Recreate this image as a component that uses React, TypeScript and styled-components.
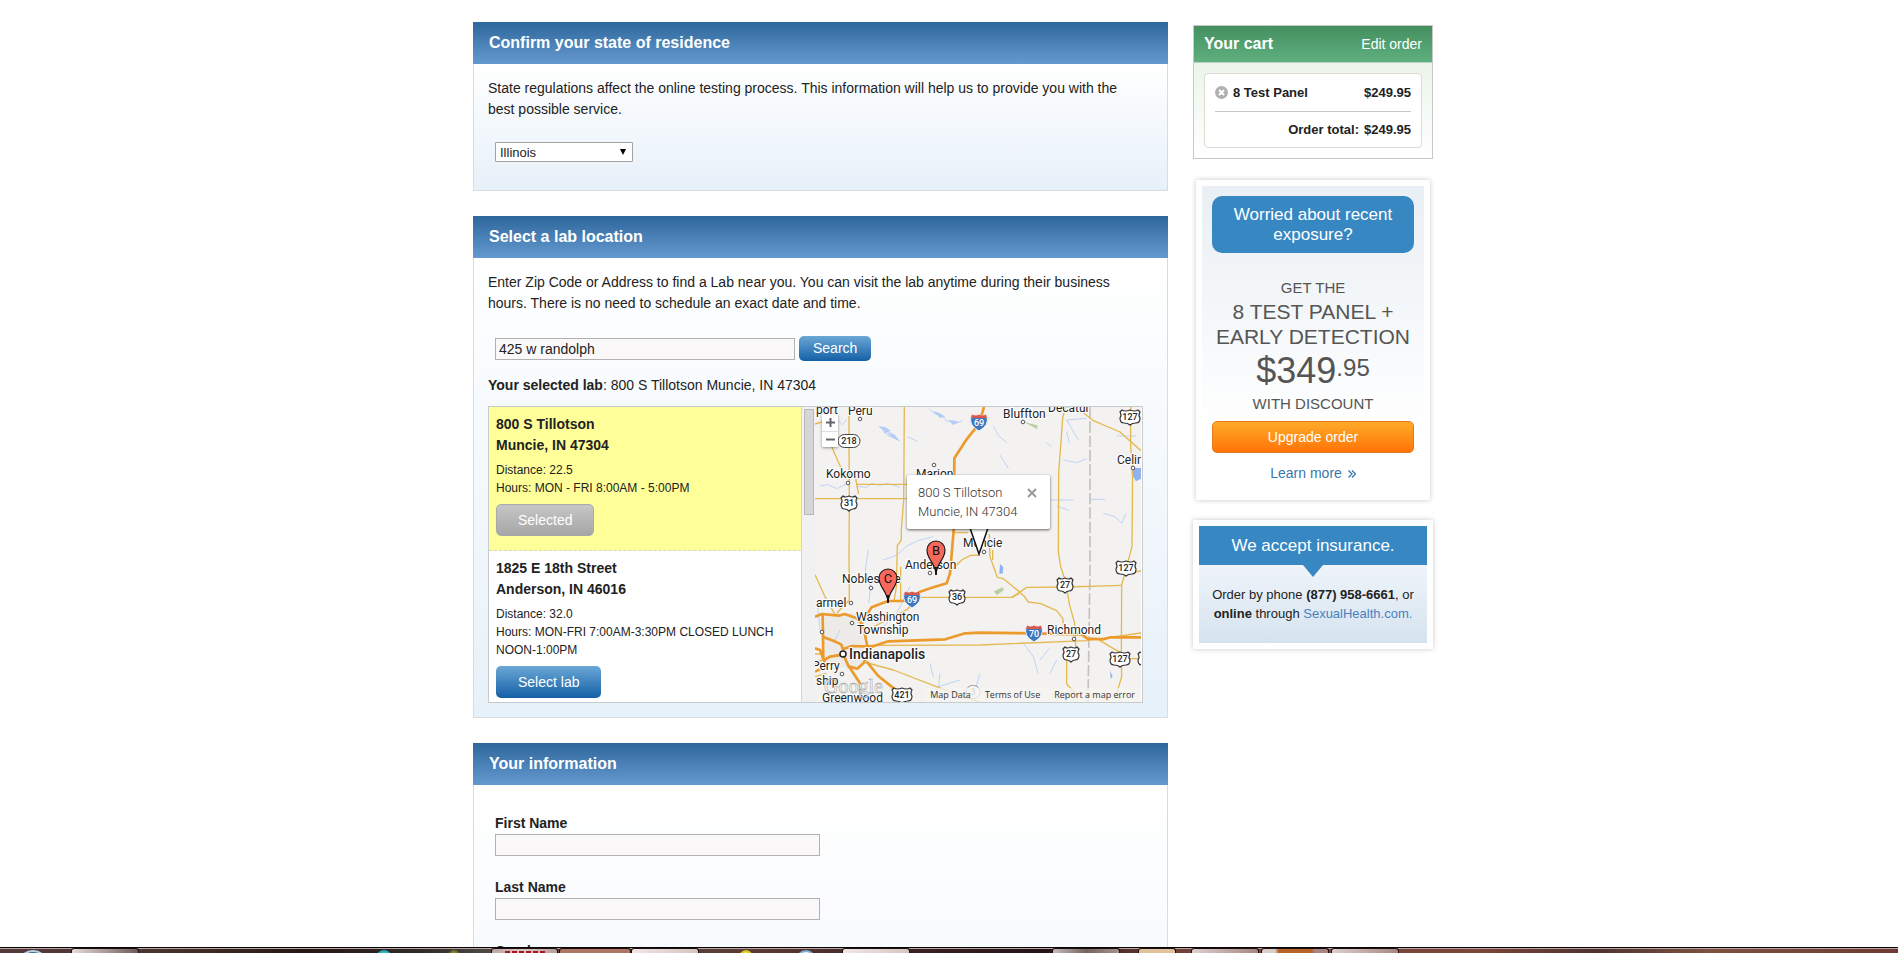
import React from 'react';
import styled, { createGlobalStyle, css } from 'styled-components';

const GlobalStyle = createGlobalStyle`
  *, *::before, *::after { box-sizing: border-box; }
  body {
    margin: 0;
    background: #fff;
    color: #222;
    font: 14px/21px "Liberation Sans", Arial, sans-serif;
  }
  p, h2, h3 { margin: 0; }
  button, input, select { font-family: inherit; margin: 0; }
  a { text-decoration: none; }
`;

/* ---------- page frame ---------- */

const Screen = styled.div`
  display: flex;
  flex-direction: column;
  height: 100vh;
  overflow: hidden;
`;

const Viewport = styled.div`
  flex: 1;
  min-height: 0;
  overflow: hidden;
`;

const Page = styled.div`
  display: flex;
  align-items: flex-start;
  gap: 25px;
  max-width: 968px;
  margin: 0 auto;
  padding: 22px 0 0 8px;
`;

const Main = styled.main`
  display: flex;
  flex-direction: column;
  gap: 25px;
  flex: 1;
  min-width: 0;
`;

const Side = styled.aside`
  flex: 0 0 240px;
  padding-top: 3px;
`;

/* ---------- panels ---------- */

const PanelTitle = styled.h2`
  padding: 0 16px;
  background: linear-gradient(#2e679c, #6499cf);
  color: #fff;
  font-size: 16px;
  line-height: 42px;
`;

const PanelBody = styled.div<{ $tall?: boolean }>`
  display: flex;
  flex-direction: column;
  align-items: flex-start;
  padding: 14px 24px 14px 14px;
  border: 1px solid #d9dbdf;
  border-top: 0;
  background: linear-gradient(#fff, #e7f1f9);
  ${(p) => p.$tall && css`min-height: 560px;`}
`;

const Panel = ({ title, tall, children }: { title: string; tall?: boolean; children: React.ReactNode }) => (
  <section>
    <PanelTitle>{title}</PanelTitle>
    <PanelBody $tall={tall}>{children}</PanelBody>
  </section>
);

/* ---------- form parts ---------- */

const SelectBox = styled.span`
  position: relative;
  display: inline-block;
  width: 138px;
  margin: 22px 0 14px 7px;
  svg {
    position: absolute;
    right: 6px;
    top: 6px;
    pointer-events: none;
  }
`;

const Select = styled.select`
  display: block;
  appearance: none;
  width: 100%;
  height: 20px;
  padding: 0 4px;
  border: 1px solid #a2a2a2;
  border-radius: 1px;
  background: #fff;
  color: #222;
  font-size: 13px;
`;

const TextInput = styled.input`
  width: 325px;
  height: 22px;
  padding: 0 3px;
  border: 1px solid #b1b1b3;
  background: #faf8f9;
  color: #222;
  font-size: 14px;
`;

const SearchForm = styled.form`
  display: flex;
  align-items: center;
  gap: 4px;
  margin: 22px 0 14px 7px;
  ${TextInput} { width: 300px; }
`;

const Button = styled.button<{ $tone?: 'blue' | 'grey' | 'orange'; $size?: 'small' | 'wide' }>`
  height: 32px;
  padding: 0 21px;
  border: 1px solid transparent;
  border-radius: 5px;
  color: #fff;
  font-size: 14px;
  line-height: 28px;
  background: linear-gradient(#6ba7d6, #1460a6) border-box;
  ${(p) => p.$tone === 'grey' && css`
    border-color: #a9a9a9;
    background: linear-gradient(#c6c6c6, #a6a6a6);
  `}
  ${(p) => p.$tone === 'orange' && css`
    border-color: #e47a1d;
    background: linear-gradient(#ffab28, #ff7407);
  `}
  ${(p) => p.$size === 'small' && css`
    height: 25px;
    padding: 0 13px;
    line-height: 21px;
  `}
  ${(p) => p.$size === 'wide' && css`
    display: block;
    width: 100%;
    padding: 0;
  `}
`;

const Fields = styled.form`
  display: flex;
  flex-direction: column;
  gap: 21px;
  padding: 14px 0 0 7px;
`;

const Field = styled.label`
  display: flex;
  flex-direction: column;
  font-weight: bold;
  line-height: 21px;
`;

/* ---------- lab list and map ---------- */

const LabFinder = styled.div`
  display: flex;
  width: 100%;
  height: 297px;
  margin-top: 10px;
  border: 1px solid #c8cbce;
  background: #fff;
  overflow: hidden;
`;

const LabList = styled.div`
  flex: 1;
  min-width: 0;
`;

const Lab = styled.article<{ $selected?: boolean }>`
  padding: 7px 7px 14px;
  border-bottom: 1px dashed #d3d3d3;
  background: ${(p) => (p.$selected ? '#ffff99' : '#fff')};
  h3 { font-size: 14px; line-height: 21px; }
  p { margin: 5px 0 7px; font-size: 12px; line-height: 18px; }
`;

const Scrollbar = styled.div`
  flex: 0 0 14px;
  padding: 2px 1px 0 2px;
  border-left: 1px solid #d5d5d5;
  background: #f1f1f1;
  div {
    height: 106px;
    border: 1px solid #b9b9b9;
    background: #d6d6d6;
  }
`;

const MapBox = styled.div`
  position: relative;
  flex: 0 0 326px;
  margin-right: 1px;
  overflow: hidden;
  background: #f3f2f0;
  font-family: Roboto, sans-serif;
  > svg { display: block; }
`;

const ZoomControl = styled.div`
  position: absolute;
  left: 7px;
  top: 7px;
  display: flex;
  flex-direction: column;
  width: 16px;
  border-radius: 1px;
  background: #fff;
  box-shadow: 0 1px 3px rgba(0, 0, 0, 0.4);
  button {
    display: flex;
    align-items: center;
    justify-content: center;
    height: 17px;
    padding: 0;
    border: 0;
    background: none;
  }
  button + button { border-top: 1px solid #ddd; height: 16px; }
`;

const InfoWindow = styled.div`
  position: absolute;
  left: 92px;
  top: 68px;
  width: 143px;
  height: 54px;
  padding: 8px 11px;
  border-radius: 2px;
  background: #fff;
  box-shadow: 0 1px 3px rgba(0, 0, 0, 0.6);
  color: #333;
  font-size: 13px;
  font-weight: 300;
  line-height: 19px;
  button {
    position: absolute;
    right: 13px;
    top: 13px;
    display: flex;
    padding: 0;
    border: 0;
    background: none;
  }
`;

const MapCredits = styled.div`
  position: absolute;
  right: 0;
  bottom: 0;
  display: flex;
  gap: 14px;
  height: 14px;
  padding: 0 6px 0 5px;
  background: rgba(245, 244, 242, 0.75);
  font: 9px/14px "Open Sans", "DejaVu Sans", sans-serif;
  a { color: #333; }
`;

const ROAD = '#e5b951';
const HIGHWAY = '#eb9a2b';
const WATER = '#b3cdf6';

const minorRoads = [
  'M147 21V140L148 300 147 470 148 600',
  'M45 72L66 66M95 140L122 202 126 204',
  'M313 21L312 180 311 300 304 390V420L292 436 289 560 282 606',
  'M45 296H320M170 253H325M147 210L166 232 176 282',
  'M45 524L74 588 104 642M110 640L148 600',
  'M302 500V600M202 690L322 628 346 604',
  'M460 398H505M450 514L488 478 512 466 540 465',
  'M360 592H636L680 562 800 561 966 556',
  'M636 592L658 580',
  'M45 762H72M160 740L210 736 540 735 860 722 1023 699',
  'M192 786L280 810 415 862 540 907',
  'M796 21L788 55 776 220 775 455 782 500 797 545 808 612 824 670 828 760 800 770 800 852 830 885',
  'M850 38L880 62 960 96 1023 152',
  'M992 21V140L998 200 996 440 965 555 964 780 965 830 950 880',
  'M978 520L1023 513M975 776H1023M900 722L965 760',
  'M568 402L570 470 592 532 610 536 640 560 672 588 685 606 722 611 770 632 788 655 792 685',
  'M45 790L75 775 128 760M45 830L80 820',
  'M578 450V480',
];

const highways = [
  'M552 21L538 70 500 118 463 175 462 380 450 520 440 550 400 562 360 575 320 603H264L215 622 198 648 188 666',
  'M45 650L66 642 116 647 134 642 170 655 190 676 198 720 202 738',
  'M68 645L70 780M68 710L100 722 124 734 130 750',
  'M128 748L156 738 215 740 265 724 436 718 495 700 540 698 700 700 845 703 862 716 910 718 932 712H1023',
  'M70 782L90 770 130 764 146 800 172 806 190 790 200 772',
  'M146 798L180 850 182 907M200 785L235 828 290 872M45 815L72 802 74 775M45 745L60 750 72 782',
];

const waters = [
  'M238 80L262 92 268 106 298 122M250 95L272 112M388 25L402 40 428 48 438 62 468 70 488 62M322 110L352 124',
  'M170 259L200 262 214 250 240 256 262 250 300 262M60 258L84 254 110 266 140 252M100 50L128 74 140 58',
  'M205 450L196 510 212 560 206 610M250 480L290 466 320 438 360 420 400 410M330 560L290 640 240 690',
  'M580 78L596 108 620 128M600 165L625 205M740 128L755 140M800 95L808 130M790 180L830 188 860 176',
  'M835 120L800 60 860 55M746 300H820M770 318L805 330M910 340L945 350 965 370 978 340M870 298H915',
  'M950 108H1008M670 730L700 770 714 820M748 745L720 780M770 780L750 820M540 820L528 860',
  'M390 790L400 830M420 820L416 860 480 840M120 690L100 730M52 610L60 690 80 720',
];

const towns: [number, number][] = [
  [45, 12], [33, 76], [119, 58], [56, 181], [115, 166], [169, 145], [36, 196], [37, 216],
  [27, 267], [208, 15], [318, 61], [259, 232], [7, 225],
];

const places: [string, number, number][] = [
  ['port', 1, 7], ['Peru', 33, 8], ['Kokomo', 11, 71], ['Marion', 101, 71], ['Noblesville', 27, 176],
  ['Anderson', 90, 162], ['Muncie', 148, 140], ['armel', 1, 200], ['Washington', 41, 214],
  ['Township', 42, 227], ['Perry', -3, 263], ['ship', 1, 278], ['Greenwood', 7, 295],
  ['Bluffton', 188, 11], ['Decatur', 233, 5], ['Celina', 302, 57], ['Richmond', 232, 227],
];

const MapText = styled.text<{ $big?: boolean }>`
  fill: #222;
  stroke: #fff;
  stroke-width: 2px;
  paint-order: stroke;
  font-size: ${(p) => (p.$big ? 14 : 12)}px;
  font-weight: ${(p) => (p.$big ? 500 : 400)};
`;

const ShieldText = styled.text`
  font-size: 9px;
  font-weight: 500;
  text-anchor: middle;
`;

const UsShield = ({ x, y, n, wide }: { x: number; y: number; n?: string; wide?: boolean }) => {
  const w = wide ? 10 : 8;
  return (
    <g transform={`translate(${x} ${y})`}>
      <path
        d={`M${-w + 2} -7Q${-w / 2} -5 0 -7Q${w / 2} -5 ${w - 2} -7L${w} -5Q${w - 2} -2 ${w} 1Q${w} 6 ${w - 4} 6Q2 6 0 8Q-2 6 ${-w + 4} 6Q${-w} 6 ${-w} 1Q${-w + 2} -2 ${-w} -5Z`}
        fill="#fff"
        stroke="#333"
        strokeWidth="1.2"
        strokeLinejoin="round"
      />
      {n && <ShieldText y="3" fill="#222">{n}</ShieldText>}
    </g>
  );
};

const StateShield = ({ x, y, n, faded }: { x: number; y: number; n: string; faded?: boolean }) => (
  <g transform={`translate(${x} ${y})`} opacity={faded ? 0.5 : 1}>
    <rect x={n.length > 1 ? -11 : -7} y="-6.5" width={n.length > 1 ? 22 : 14} height="13" rx="6.5" fill="#fff" stroke="#444" />
    <ShieldText y="3" fill="#222">{n}</ShieldText>
  </g>
);

const Interstate = ({ x, y, n }: { x: number; y: number; n: string }) => (
  <g transform={`translate(${x} ${y})`}>
    <path d="M-7 -7Q-3 -5 0 -7Q3 -5 7 -7Q10 -2 7 3Q5 6 0 9Q-5 6 -7 3Q-10 -2 -7 -7Z" fill="#3f78bd" stroke="#fff" strokeWidth=".8" />
    <path d="M-7 -7.500Q-3 -5.500 0 -7.500Q3 -5.500 7 -7.500L8 -4H-8Z" fill="#d9574c" />
    <ShieldText y="4" fill="#fff">{n}</ShieldText>
  </g>
);

const Marker = ({ x, y, n }: { x: number; y: number; n: string }) => (
  <g transform={`translate(${x} ${y})`}>
    <path d="M0 0C-1 -12 -9 -14 -9 -24A9 9 0 0 1 9 -24C9 -14 1 -12 0 0Z" fill="#f7685c" stroke="#111" strokeWidth="1.1" />
    <text y="-19" textAnchor="middle" fontSize="13" fill="#111">{n}</text>
    <path d="M0 1V-7" stroke="#111" strokeWidth="1.8" />
  </g>
);

const LabMap = () => (
  <MapBox>
    <svg width="326" height="295" viewBox="0 0 326 295" role="img" aria-label="Map of labs near Muncie, Indiana">
      <rect width="326" height="295" fill="#f3f2f0" />
      <g transform="scale(.33333) translate(-45 -21)" fill="none" strokeLinejoin="round">
        <path d="M60 640H190V800H80Z" fill="#ecebe8" />
        {waters.map((d) => <path key={d} d={d} stroke={WATER} strokeWidth="2.500" />)}
        <path d="M236 78L256 82 272 92 264 96 258 100 250 92ZM266 96L284 104 300 124 286 118 274 112ZM398 32L420 40 436 50 420 54ZM446 60L476 64 460 76Z" fill={WATER} />
        <path d="M995 204H1023V236L1008 244 995 222ZM600 492L610 502 608 520 598 522ZM930 812L938 830 932 836Z" fill="#8fb2f2" />
        <path d="M672 66L712 76V88ZM582 574L608 562 612 570 590 586ZM950 888L965 890 960 905Z" fill="#b9cfa0" />
        <path d="M870 21V500L864 907" stroke="#c4c2bf" strokeWidth="5" strokeDasharray="34 9" />
        {minorRoads.map((d) => <path key={d} d={d} stroke={ROAD} strokeWidth="4" />)}
        {highways.map((d) => <path key={d} d={d} stroke={HIGHWAY} strokeWidth="8" />)}
      </g>
      {towns.map(([x, y]) => <circle key={`${x}-${y}`} cx={x} cy={y} r="1.800" fill="#fff" stroke="#555" />)}
      <circle cx="28" cy="247" r="3" fill="#fff" stroke="#222" strokeWidth="1.500" />
      {places.map(([name, x, y]) => <MapText key={name} x={x} y={y}>{name}</MapText>)}
      <MapText $big x="34" y="252">Indianapolis</MapText>
      <StateShield x={34} y={34} n="218" />
      <UsShield x={34} y={96} n="31" />
      <UsShield x={142} y={190} n="36" />
      <UsShield x={87} y={288} n="421" wide />
      <UsShield x={250} y={178} n="27" />
      <UsShield x={256} y={247} n="27" />
      <UsShield x={315} y={10} n="127" wide />
      <UsShield x={311} y={161} n="127" wide />
      <UsShield x={305} y={252} n="127" wide />
      <UsShield x={333} y={252} wide />
      <StateShield x={158} y={285} n="3" faded />
      <Interstate x={97} y={192} n="69" />
      <Interstate x={164} y={15} n="69" />
      <Interstate x={219} y={226} n="70" />
      <Marker x={121} y={167} n="B" />
      <Marker x={73} y={195} n="C" />
      <path d="M154 121L164 147 174 121Z" fill="#fff" />
      <path d="M155 121L164 147 173 121" fill="none" stroke="#111" strokeWidth="1.500" />
      <text x="9" y="286" fontSize="20" fontFamily="Liberation Serif, serif" fill="#fff" stroke="#999" strokeWidth=".5">Google</text>
    </svg>
    <ZoomControl>
      <button type="button" aria-label="Zoom in">
        <svg width="9" height="9" viewBox="0 0 9 9"><path d="M4.500 0V9M0 4.500H9" stroke="#666" strokeWidth="2" /></svg>
      </button>
      <button type="button" aria-label="Zoom out">
        <svg width="9" height="9" viewBox="0 0 9 9"><path d="M0 4.500H9" stroke="#666" strokeWidth="2" /></svg>
      </button>
    </ZoomControl>
    <InfoWindow>
      800 S Tillotson<br />Muncie, IN 47304
      <button type="button" aria-label="Close">
        <svg width="10" height="10" viewBox="0 0 10 10"><path d="M1 1L9 9M9 1L1 9" stroke="#999" strokeWidth="2" /></svg>
      </button>
    </InfoWindow>
    <MapCredits>
      <a href="#data">Map Data</a>
      <a href="#terms">Terms of Use</a>
      <a href="#report">Report a map error</a>
    </MapCredits>
  </MapBox>
);

/* ---------- sidebar ---------- */

const Cart = styled.section`
  margin-bottom: 21px;
  border: 1px solid #c6c9c6;
  background: linear-gradient(#e4f0e4, #fff);
`;

const CartHead = styled.div`
  display: flex;
  justify-content: space-between;
  align-items: center;
  height: 37px;
  padding: 0 10px;
  border-bottom: 1px solid #bcd3c2;
  background: linear-gradient(#458f5f, #5fb07f);
  color: #fff;
  h2 { font-size: 16px; line-height: 20px; }
  a { color: #fff; }
`;

const CartBox = styled.div`
  margin: 10px;
  padding: 0 10px;
  border: 1px solid #dcdcd2;
  border-radius: 4px;
  background: #fff;
  font-size: 13px;
  font-weight: bold;
`;

const CartRow = styled.div<{ $total?: boolean }>`
  display: flex;
  align-items: center;
  gap: 5px;
  height: ${(p) => (p.$total ? 36 : 37)}px;
  ${(p) => p.$total && css`
    justify-content: flex-end;
    border-top: 1px solid #c8c8c8;
  `}
  button {
    display: flex;
    padding: 0;
    border: 0;
    background: none;
  }
  span:last-child { margin-left: ${(p) => (p.$total ? '0' : 'auto')}; }
`;

const Card = styled.section<{ $narrow?: boolean }>`
  margin: 0 ${(p) => (p.$narrow ? 3 : 0)}px 20px;
  padding: 6px;
  background: #fff;
  box-shadow: 0 0 5px rgba(0, 0, 0, 0.22);
  text-align: center;
`;

const Promo = styled.div`
  display: flex;
  flex-direction: column;
  align-items: stretch;
  height: 308px;
  padding: 10px 10px 0;
  background: linear-gradient(#e9eff4, #fff 80%);
  color: #555;
`;

const Question = styled.h2`
  margin-bottom: 23px;
  padding: 9px 16px 8px;
  border-radius: 10px;
  background: #3787c3;
  color: #fff;
  font-size: 17px;
  font-weight: normal;
  line-height: 20px;
`;

const Offer = styled.p<{ $kind: 'note' | 'name' | 'price' }>`
  margin: 0 -6px;
  ${(p) => p.$kind === 'note' && css`font-size: 15px; line-height: 23px;`}
  ${(p) => p.$kind === 'name' && css`font-size: 21px; line-height: 25px;`}
  ${(p) => p.$kind === 'price' && css`
    display: flex;
    justify-content: center;
    font-size: 36px;
    line-height: 43px;
    span { font-size: 24px; line-height: 38px; }
  `}
`;

const UpgradeRow = styled.div`
  margin: 6px 0 10px;
`;

const LearnMore = styled.a`
  color: #3a76ad;
  svg { margin-left: 2px; }
`;

const InsuranceTitle = styled.h2`
  background: #3787c3;
  color: #fff;
  font-size: 17px;
  font-weight: normal;
  line-height: 39px;
`;

const InsuranceText = styled.div`
  height: 78px;
  background: linear-gradient(#eff4fa, #d5e3ef);
  font-size: 13px;
  line-height: 19px;
  svg { display: block; margin: 0 auto 8px; }
  a { color: #4a80bd; }
`;

/* ---------- taskbar ---------- */

const Taskbar = styled.footer`
  display: flex;
  flex: 0 0 6px;
  overflow: hidden;
  border-top: 1px solid #0c0507;
  box-shadow: inset 0 1px #b9a5a0;
  background: linear-gradient(90deg, #54393a 0, #4a3330 8%, #251713 16%, #2f2a28 22%, #4e4a45 26%, #5a3a35 40%, #3f2226 47%, #241317 55%, #6e4238 62%, #7e4538 78%, #4e3230 84%, #7c5240 90%, #6f3a33 100%);
`;

const Task = styled.span<{ $gap: number; $width: number; $look?: string; $dot?: string }>`
  display: flex;
  justify-content: center;
  flex: 0 0 auto;
  width: ${(p) => p.$width}px;
  margin-left: ${(p) => p.$gap}px;
  overflow: hidden;
  ${(p) => !p.$dot && css`
    border: 1px solid #1c1012;
    border-bottom: 0;
    border-radius: 3px 3px 0 0;
    background: ${p.$look};
  `}
  ${(p) => p.$dot && css`
    height: 20px;
    margin-top: 2px;
    border: 2px solid ${p.$look};
    border-radius: 50%;
    background: ${p.$dot};
  `}
`;

const RedTops = styled.i`
  width: 40px;
  height: 3px;
  margin-top: 2px;
  background: repeating-linear-gradient(90deg, #b1141c 0 5px, transparent 5px 7px);
`;

const PALE = 'linear-gradient(90deg, #f0e6e4, #d5c5c2)';

export default function App() {
  return (
    <Screen>
      <GlobalStyle />
      <Viewport>
        <Page>
          <Main>
            <Panel title="Confirm your state of residence">
              <p>
                State regulations affect the online testing process. This information will help us to provide you with the best possible service.
              </p>
              <SelectBox>
                <Select aria-label="State of residence" defaultValue="Illinois">
                  <option>Illinois</option>
                  <option>Indiana</option>
                </Select>
                <svg width="8" height="8" viewBox="0 0 8 8"><path d="M1 1H7L4 7Z" fill="#000" /></svg>
              </SelectBox>
            </Panel>

            <Panel title="Select a lab location">
              <p>
                Enter Zip Code or Address to find a Lab near you. You can visit the lab anytime during their business hours. There is no need to schedule an exact date and time.
              </p>
              <SearchForm onSubmit={(e) => e.preventDefault()}>
                <TextInput aria-label="Zip Code or Address" defaultValue="425 w randolph" />
                <Button $size="small">Search</Button>
              </SearchForm>
              <p><b>Your selected lab</b>: 800 S Tillotson Muncie, IN 47304</p>
              <LabFinder>
                <LabList>
                  <Lab $selected>
                    <h3>800 S Tillotson<br />Muncie, IN 47304</h3>
                    <p>Distance: 22.5<br />Hours: MON - FRI 8:00AM - 5:00PM</p>
                    <Button type="button" $tone="grey">Selected</Button>
                  </Lab>
                  <Lab>
                    <h3>1825 E 18th Street<br />Anderson, IN 46016</h3>
                    <p>Distance: 32.0<br />Hours: MON-FRI 7:00AM-3:30PM CLOSED LUNCH NOON-1:00PM</p>
                    <Button type="button">Select lab</Button>
                  </Lab>
                </LabList>
                <Scrollbar><div /></Scrollbar>
                <LabMap />
              </LabFinder>
            </Panel>

            <Panel title="Your information" tall>
              <Fields>
                <Field>First Name<TextInput name="first" /></Field>
                <Field>Last Name<TextInput name="last" /></Field>
                <Field>Gender<TextInput name="gender" /></Field>
              </Fields>
            </Panel>
          </Main>

          <Side>
            <Cart>
              <CartHead>
                <h2>Your cart</h2>
                <a href="#edit">Edit order</a>
              </CartHead>
              <CartBox>
                <CartRow>
                  <button type="button" aria-label="Remove 8 Test Panel">
                    <svg width="13" height="13" viewBox="0 0 13 13">
                      <circle cx="6.500" cy="6.500" r="6.500" fill="#b0b0b0" />
                      <path d="M4 4L9 9M9 4L4 9" stroke="#fff" strokeWidth="2" />
                    </svg>
                  </button>
                  <span>8 Test Panel</span>
                  <span>$249.95</span>
                </CartRow>
                <CartRow $total>
                  <span>Order total:</span>
                  <span>$249.95</span>
                </CartRow>
              </CartBox>
            </Cart>

            <Card $narrow>
              <Promo>
                <Question>Worried about recent exposure?</Question>
                <Offer $kind="note">GET THE</Offer>
                <Offer $kind="name">8 TEST PANEL +<br />EARLY DETECTION</Offer>
                <Offer $kind="price">$349<span>.95</span></Offer>
                <Offer $kind="note">WITH DISCOUNT</Offer>
                <UpgradeRow>
                  <Button type="button" $tone="orange" $size="wide">Upgrade order</Button>
                </UpgradeRow>
                <LearnMore href="#more">
                  Learn more{' '}
                  <svg width="8" height="8" viewBox="0 0 8 8"><path d="M.5 .5L4 4L.5 7.500M4 .5L7.500 4L4 7.500" fill="none" stroke="#3a76ad" strokeWidth="1.300" /></svg>
                </LearnMore>
              </Promo>
            </Card>

            <Card>
              <InsuranceTitle>We accept insurance.</InsuranceTitle>
              <InsuranceText>
                <svg width="20" height="12" viewBox="0 0 20 12"><path d="M0 0H20L10 12Z" fill="#3787c3" /></svg>
                <p>
                  Order by phone <b>(877) 958-6661</b>, or<br />
                  <b>online</b> through <a href="#sexualhealth">SexualHealth.com.</a>
                </p>
              </InsuranceText>
            </Card>
          </Side>
        </Page>
      </Viewport>

      <Taskbar>
        <Task $gap={20} $width={26} $look="#b9d3e6" $dot="#3c6c94" />
        <Task $gap={25} $width={68} $look="linear-gradient(90deg, #e3dcda, #6f5a57)" />
        <Task $gap={236} $width={18} $look="#2ba7b8" $dot="#39c2cf" />
        <Task $gap={54} $width={14} $look="#76762b" $dot="#8b8b33" />
        <Task $gap={30} $width={67} $look="linear-gradient(90deg, #bca5a2, #d9c6c3, #b49d9a)"><RedTops /></Task>
        <Task $gap={1} $width={72} $look="#ad7564" />
        <Task $gap={0} $width={68} $look={PALE} />
        <Task $gap={39} $width={16} $look="#dcc51e" $dot="#f4df3c" />
        <Task $gap={42} $width={20} $look="#7aaed0" $dot="#e6f2fa" />
        <Task $gap={26} $width={68} $look={PALE} />
        <Task $gap={142} $width={68} $look="linear-gradient(90deg, #c3bcbb, #75625f, #a4938f)" />
        <Task $gap={18} $width={38} $look="#e0c39c" />
        <Task $gap={15} $width={68} $look="linear-gradient(90deg, #dccfcd, #a88682)" />
        <Task $gap={2} $width={68} $look="linear-gradient(90deg, #d7cdcb 20%, #b8632a 25% 75%, #a88682 80%)" />
        <Task $gap={2} $width={68} $look="linear-gradient(90deg, #dccfcd, #a88682)" />
      </Taskbar>
    </Screen>
  );
}
